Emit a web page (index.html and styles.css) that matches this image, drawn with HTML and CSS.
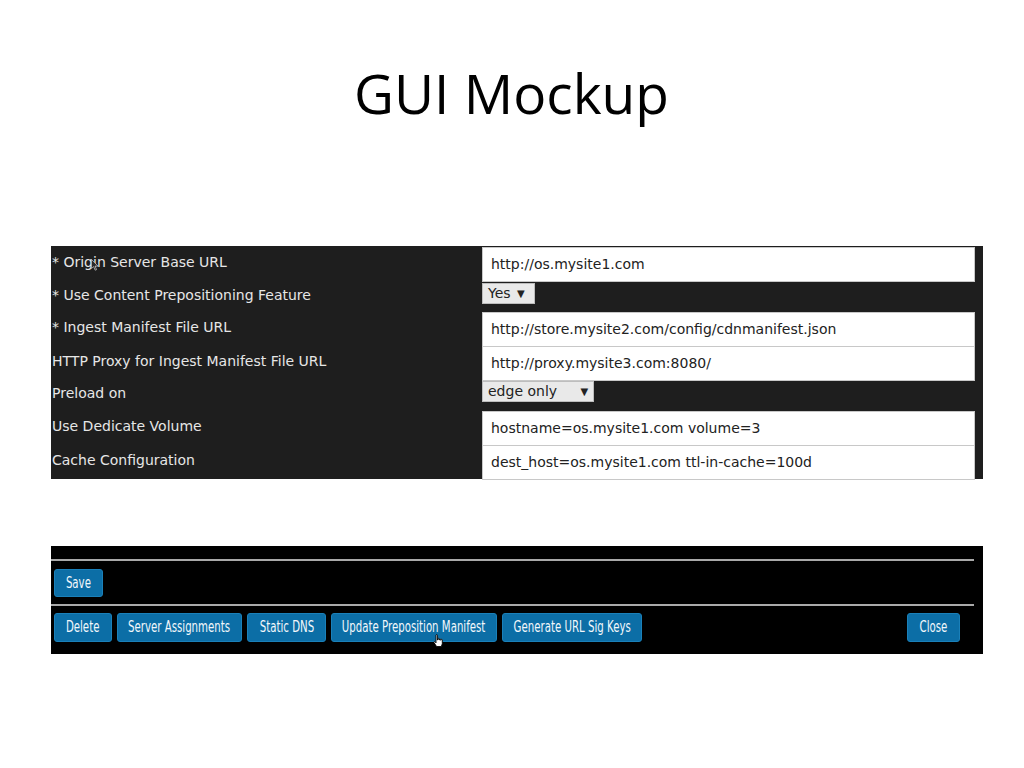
FILE: index.html
```html
<!DOCTYPE html>
<html>
<head>
<meta charset="utf-8">
<link rel="stylesheet" href="styles.css">
</head>
<body>
<h1 class="title">GUI Mockup</h1>

<div class="form-panel">
  <div class="label"><span class="cursor-host">* Origin Server Base URL<svg class="arrow-cursor" width="8" height="12" viewBox="0 0 8 12"><path d="M0.5 0.5 L0.5 9.5 L2.6 7.6 L4.2 11.2 L5.6 10.6 L4 7.1 L7 7.1 Z" fill="#2a2a2a" stroke="#bbb" stroke-width="0.8"/></svg></span></div>
  <div class="field"><div class="text-input">http://os.mysite1.com</div></div>

  <div class="label">* Use Content Prepositioning Feature</div>
  <div class="field"><div class="select select-yes">Yes <span class="caret">▼</span></div></div>

  <div class="label">* Ingest Manifest File URL</div>
  <div class="field"><div class="text-input">http://store.mysite2.com/config/cdnmanifest.json</div></div>

  <div class="label">HTTP Proxy for Ingest Manifest File URL</div>
  <div class="field"><div class="text-input">http://proxy.mysite3.com:8080/</div></div>

  <div class="label">Preload on</div>
  <div class="field"><div class="select select-edge">edge only <span class="caret">▼</span></div></div>

  <div class="label">Use Dedicate Volume</div>
  <div class="field"><div class="text-input">hostname=os.mysite1.com volume=3</div></div>

  <div class="label">Cache Configuration</div>
  <div class="field"><div class="text-input">dest_host=os.mysite1.com ttl-in-cache=100d</div></div>
</div>

<div class="action-panel">
  <div class="rule"></div>
  <div class="btn-row save-row">
    <button class="btn btn-save"><span class="btn-text">Save</span></button>
  </div>
  <div class="rule rule-second"></div>
  <div class="btn-row">
    <button class="btn btn-delete"><span class="btn-text">Delete</span></button>
    <button class="btn btn-servers"><span class="btn-text">Server Assignments</span></button>
    <button class="btn btn-dns"><span class="btn-text">Static DNS</span></button>
    <button class="btn btn-manifest"><span class="btn-text">Update Preposition Manifest</span><svg class="hand-cursor" width="11" height="14" viewBox="0 0 11 14"><path d="M3 1.2 C3 0.5 4.4 0.5 4.4 1.2 L4.4 6 L4.8 6 L4.8 4.8 C4.8 4.2 6.1 4.2 6.1 4.8 L6.1 6 L6.4 6 L6.4 5.3 C6.4 4.7 7.7 4.7 7.7 5.3 L7.7 6.2 L8 6.2 L8 5.8 C8 5.2 9.3 5.2 9.3 5.8 L9.3 9.8 L8.3 12.6 L3.6 12.6 L1 8.6 C0.6 7.9 1.5 7.2 2.1 7.8 L3 8.8 Z" fill="#fff" stroke="#000" stroke-width="0.9" stroke-linejoin="round"/></svg></button>
    <button class="btn btn-keys"><span class="btn-text">Generate URL Sig Keys</span></button>
    <button class="btn btn-close"><span class="btn-text">Close</span></button>
  </div>
</div>
</body>
</html>
```

FILE: styles.css
```css
html, body {
  margin: 0;
  padding: 0;
  background: #ffffff;
}

body {
  width: 1024px;
  height: 768px;
  overflow: hidden;
  font-family: "DejaVu Sans", sans-serif;
}

.title {
  margin: 61px 0 0 0;
  height: 64px;
  line-height: 64px;
  text-align: center;
  font-family: "Open Sans", "Liberation Sans", sans-serif;
  font-weight: 400;
  font-size: 55px;
  color: #000;
  padding-right: 1px;
}

.form-panel {
  margin: 121px 0 0 51px;
  width: 932px;
  box-sizing: border-box;
  background: #1e1e1e;
  padding: 1px 8px 0 0;
  display: grid;
  grid-template-columns: 431px 493px;
  grid-template-rows: 35px 30px 34px 34px 31px 34px 34px;
}

.label {
  align-self: center;
  color: #e6e6e6;
  font-size: 14px;
  line-height: 17px;
  padding-left: 1px;
  margin-top: -4px;
  white-space: nowrap;
}

.cursor-host {
  position: relative;
}

.arrow-cursor {
  position: absolute;
  left: 39px;
  top: 5px;
}

.field {
  display: flex;
  flex-direction: column;
  align-items: flex-start;
}

.text-input {
  box-sizing: border-box;
  width: 100%;
  height: 35px;
  background: #ffffff;
  border: 1px solid #c8c8c8;
  padding: 0 8px;
  font-size: 14px;
  line-height: 33px;
  color: #222;
  white-space: nowrap;
}

.select {
  box-sizing: border-box;
  height: 21px;
  margin-top: 1px;
  background: #e9e9e9;
  border: 1px solid #bdbdbd;
  color: #222;
  font-size: 14px;
  line-height: 18px;
  padding-left: 5px;
  white-space: nowrap;
}

.select-yes {
  width: 53px;
}

.select-edge {
  width: 112px;
}

.caret {
  font-size: 10px;
  margin-left: 2px;
  vertical-align: 1px;
}

.select-edge .caret {
  margin-left: 19px;
}

.action-panel {
  margin: 67px 0 0 51px;
  width: 932px;
  height: 108px;
  box-sizing: border-box;
  background: #000;
  padding: 13px 9px 0 0;
}

.rule {
  height: 2px;
  background: #a9a9a9;
}

.rule-second {
  margin-top: 7px;
}

.btn-row {
  display: flex;
  gap: 5px;
  padding-left: 3px;
  margin-top: 7px;
}

.save-row {
  margin-top: 8px;
}

.btn {
  position: relative;
  display: flex;
  justify-content: center;
  align-items: center;
  height: 29px;
  box-sizing: border-box;
  margin: 0;
  padding: 0;
  background: #0c6ea6;
  border: 1px solid #1a80b9;
  border-radius: 3px;
  color: #f2f7fb;
  font-family: "DejaVu Sans", sans-serif;
  font-size: 15px;
  line-height: 27px;
  white-space: nowrap;
}

.btn-text {
  display: inline-block;
  transform: scaleX(0.68);
}

.save-row .btn {
  height: 28px;
}

.btn-save { width: 49px; }
.btn-delete { width: 58px; }
.btn-servers { width: 125px; }
.btn-dns { width: 79px; }
.btn-manifest { width: 166px; }
.btn-keys { width: 140px; }

.btn-close {
  width: 53px;
  margin-left: auto;
  margin-right: 14px;
}

.hand-cursor {
  position: absolute;
  left: 101px;
  top: 20px;
}
```
